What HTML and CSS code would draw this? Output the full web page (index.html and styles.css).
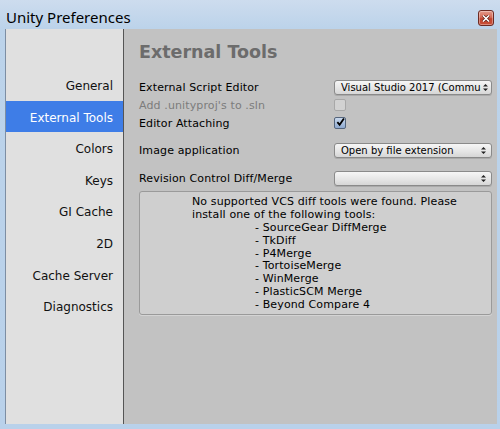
FILE: index.html
```html
<!DOCTYPE html>
<html>
<head>
<meta charset="utf-8">
<link rel="stylesheet" href="styles.css">
</head>
<body>
<div class="window">
  <div class="titlebar">
    <span class="title">Unity Preferences</span>
    <div class="close">
      <svg width="8" height="7" viewBox="0 0 8 7"><path d="M1 0.5 L7 6.5 M7 0.5 L1 6.5" stroke="#5a1a12" stroke-width="3"/><path d="M1 0.5 L7 6.5 M7 0.5 L1 6.5" stroke="#ffffff" stroke-width="1.6"/></svg>
    </div>
  </div>
  <div class="main">
    <div class="sidebar">
      <div class="nav-item">General</div>
      <div class="nav-item selected">External Tools</div>
      <div class="nav-item">Colors</div>
      <div class="nav-item">Keys</div>
      <div class="nav-item">GI Cache</div>
      <div class="nav-item">2D</div>
      <div class="nav-item">Cache Server</div>
      <div class="nav-item">Diagnostics</div>
    </div>
    <div class="content">
      <h1 class="heading">External Tools</h1>
      <div class="group">
        <div class="row">
          <span class="label">External Script Editor</span>
          <div class="dropdown"><span>Visual Studio 2017 (Commu</span><svg class="arrows" width="5" height="7" viewBox="0 0 5 7"><path d="M2.5 0 L5 2.5 L0 2.5 Z M2.5 7 L5 4.5 L0 4.5 Z" fill="#222"/></svg></div>
        </div>
        <div class="row">
          <span class="label disabled">Add .unityproj's to .sln</span>
          <div class="checkbox off"></div>
        </div>
        <div class="row">
          <span class="label">Editor Attaching</span>
          <div class="checkbox on"><svg width="10" height="10" viewBox="0 0 10 10"><path d="M1.5 5.2 L4 8 L8.8 1" fill="none" stroke="#000" stroke-width="2"/></svg></div>
        </div>
      </div>
      <div class="row row-gap">
        <span class="label">Image application</span>
        <div class="dropdown"><span>Open by file extension</span><svg class="arrows" width="5" height="7" viewBox="0 0 5 7"><path d="M2.5 0 L5 2.5 L0 2.5 Z M2.5 7 L5 4.5 L0 4.5 Z" fill="#222"/></svg></div>
      </div>
      <div class="row row-gap2">
        <span class="label">Revision Control Diff/Merge</span>
        <div class="dropdown"><span></span><svg class="arrows" width="5" height="7" viewBox="0 0 5 7"><path d="M2.5 0 L5 2.5 L0 2.5 Z M2.5 7 L5 4.5 L0 4.5 Z" fill="#222"/></svg></div>
      </div>
      <div class="helpbox">
        <div class="help-line">No supported VCS diff tools were found. Please</div>
        <div class="help-line">install one of the following tools:</div>
        <div class="help-line item">- SourceGear DiffMerge</div>
        <div class="help-line item">- TkDiff</div>
        <div class="help-line item">- P4Merge</div>
        <div class="help-line item">- TortoiseMerge</div>
        <div class="help-line item">- WinMerge</div>
        <div class="help-line item">- PlasticSCM Merge</div>
        <div class="help-line item">- Beyond Compare 4</div>
      </div>
    </div>
  </div>
</div>
</body>
</html>
```

FILE: styles.css
```css
html, body {
  margin: 0;
  padding: 0;
}
body {
  background: #b9d1ea;
  width: 500px;
  height: 429px;
  overflow: hidden;
}
.window {
  width: 500px;
  height: 429px;
  display: flex;
  flex-direction: column;
  background: linear-gradient(#cddcee 0px, #bcd3ea 28px, #b9d1ea 100%);
}
.titlebar {
  height: 29px;
  display: flex;
  align-items: flex-start;
  padding-left: 6px;
  box-sizing: border-box;
}
.title {
  font-family: "Noto Sans", sans-serif;
  font-size: 15px;
  line-height: 18px;
  padding-top: 8px;
  color: #000;
}
.close {
  margin-left: auto;
  margin-right: 6px;
  margin-top: 10px;
  width: 16px;
  height: 16px;
  box-sizing: border-box;
  border: 1px solid #6d2a22;
  border-radius: 3px;
  background: linear-gradient(#e49a8a 0%, #d46a57 45%, #c14530 55%, #c9503a 100%);
  display: flex;
  align-items: center;
  justify-content: center;
  box-shadow: inset 0 0 0 1px rgba(255,255,255,0.35);
}
.main {
  display: flex;
  height: 395px;
  margin: 0 3px 0 5px;
  border-left: 1px solid #7d8ea3;
}
.sidebar {
  width: 117px;
  background: #e0e0e0;
  border-right: 1px solid #555;
  padding-top: 40px;
  box-sizing: content-box;
  font-family: "DejaVu Sans", Verdana, sans-serif;
  font-size: 12px;
}
.nav-item {
  height: 31.6px;
  box-sizing: border-box;
  padding-top: 3px;
  line-height: 28.6px;
  text-align: right;
  padding-right: 10px;
  color: #111;
}
.nav-item.selected {
  background: #3e7de7;
  color: #fff;
}
.content {
  flex: 1;
  background: #c2c2c2;
  padding: 0 5px 0 15px;
  font-family: "DejaVu Sans", Verdana, sans-serif;
  font-size: 11px;
  letter-spacing: 0.12px;
  color: #000;
}
.heading {
  margin: 13px 0 16px 0;
  font-size: 17.5px;
  line-height: 20px;
  font-weight: bold;
  color: #6c6c6c;
  letter-spacing: 0;
}
.row {
  display: flex;
  align-items: center;
  height: 18px;
}
.row-gap {
  margin-top: 9px;
}
.row-gap2 {
  margin-top: 10px;
}
.label {
  width: 195px;
  flex: none;
  white-space: nowrap;
}
.label.disabled {
  color: #7c7c7c;
}
.dropdown {
  width: 158px;
  height: 15px;
  box-sizing: border-box;
  border: 1px solid #8a8a8a;
  border-radius: 3px;
  background: linear-gradient(#f6f6f6, #e4e4e4 60%, #d6d6d6);
  display: flex;
  align-items: center;
  padding: 0 5px 0 6px;
  font-size: 10px;
  letter-spacing: 0;
  color: #000;
  box-shadow: 0 1px 0 rgba(0,0,0,0.12);
}
.dropdown span {
  flex: 1;
  white-space: nowrap;
}
.arrows {
  flex: none;
  margin-left: 2px;
}
.checkbox {
  width: 12px;
  height: 12px;
  box-sizing: border-box;
  border-radius: 2px;
  display: flex;
  align-items: center;
  justify-content: center;
}
.checkbox.off {
  background: #d2d2d2;
  border: 1px solid #a8a8a8;
}
.checkbox.on {
  background: linear-gradient(#c9d8ec, #8ea9cf);
  border: 1px solid #55657c;
}
.checkbox.on svg {
  margin-top: -2px;
  margin-left: 1px;
}
.helpbox {
  margin-top: 4px;
  height: 124px;
  box-sizing: border-box;
  background: #cfcfcf;
  border: 1px solid #9a9a9a;
  border-radius: 3px;
  padding: 4px 0 0 52px;
  box-shadow: 0 1px 0 rgba(255,255,255,0.3);
}
.help-line {
  line-height: 12.875px;
  white-space: nowrap;
}
.help-line.item {
  padding-left: 63px;
}
```
